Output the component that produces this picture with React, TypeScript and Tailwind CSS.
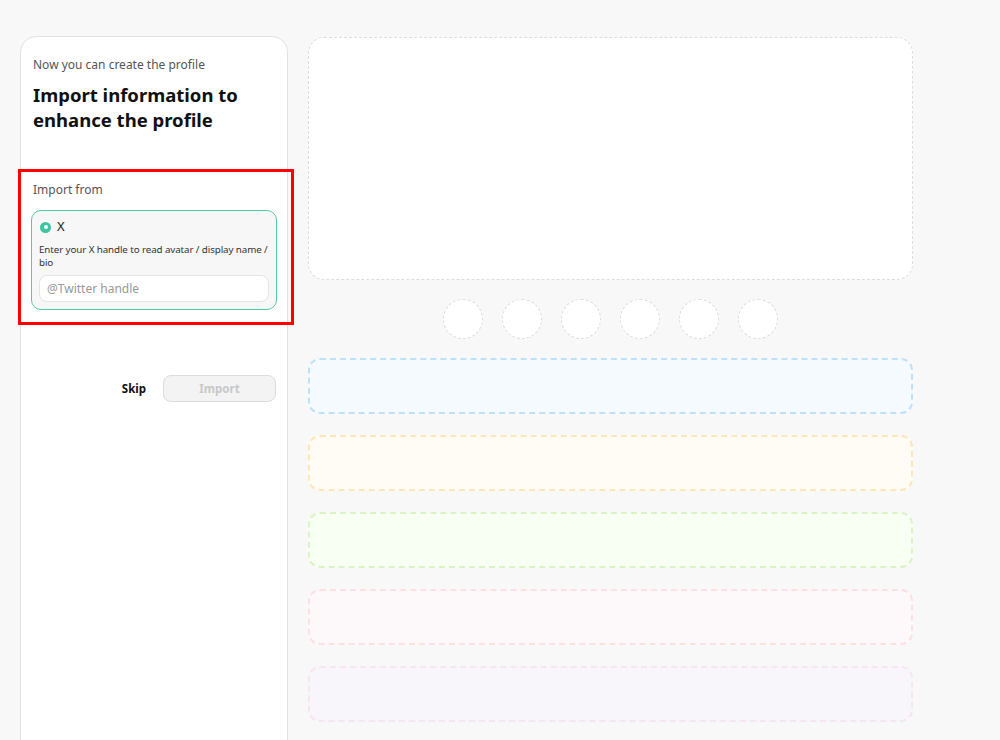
import React from 'react';

const bars = [
  'border-[#bfe1f8] bg-[#f5faff]',
  'border-[#fde6b8] bg-[#fffcf5]',
  'border-[#dbf4c6] bg-[#f8fff3]',
  'border-[#fde0e3] bg-[#fdf9fa]',
  'border-[#f6e6f1] bg-[#f8f6fa]',
];

export default function App() {
  return (
    <div className="relative min-h-[740px] h-[740px] overflow-hidden bg-[#f8f8f8] font-['Noto_Sans',sans-serif] text-[#111]">
      <div className="flex gap-5 pl-5 pt-9">
        {/* Left: import panel */}
        <div className="w-[268px] h-[760px] shrink-0 rounded-t-2xl border border-[#e2e2e2] bg-white px-[10px] pt-[19px]">
          <p className="ml-[2px] text-[12px] leading-[18px] text-[#555]">Now you can create the profile</p>
          <h2 className="ml-[2px] mt-[8px] text-[18.5px] font-bold leading-[25px] text-[#111]">
            Import information to enhance the profile
          </h2>

          <p className="ml-[2px] mt-[49px] text-[12px] leading-[18px] text-[#555]">Import from</p>

          <div className="mt-[11px] rounded-[10px] border-[1.5px] border-[#52c9a7] bg-[#f7f7f7] px-[7px] pb-[7px] pt-[7px]">
            <div className="flex h-[18px] items-center gap-[6px] pl-[1px]">
              <span className="flex h-[11px] w-[11px] items-center justify-center rounded-full bg-[#3fc3a0]">
                <span className="h-[4px] w-[4px] rounded-full bg-white" />
              </span>
              <span className="text-[13px] text-[#222]">X</span>
            </div>
            <p className="mt-[7px] text-[9.8px] leading-[13px] tracking-[-0.1px] text-[#333]">
              Enter your X handle to read avatar / display name / bio
            </p>
            <input
              placeholder="@Twitter handle"
              className="mt-[6px] h-[27px] w-full rounded-lg border border-[#e4e4e4] bg-white px-[7px] text-[12px] text-[#333] outline-none placeholder:text-[#999]"
            />
          </div>

          <div className="mt-[65px] flex items-center justify-end gap-[17px] pr-[1px]">
            <button className="text-[11.5px] font-bold text-[#111]">Skip</button>
            <button className="h-[27px] w-[113px] rounded-lg border border-[#dcdcdc] bg-[#f3f3f3] text-[11.5px] font-bold text-[#c8c8c8]">
              Import
            </button>
          </div>
        </div>

        {/* Right: profile skeleton */}
        <div className="flex w-[605px] flex-col pt-px">
          <div className="h-[243px] rounded-2xl border-[1.5px] border-dashed border-[#dddddd] bg-white" />

          <div className="mt-[19px] flex justify-center gap-[19px]">
            {[0, 1, 2, 3, 4, 5].map((i) => (
              <div key={i} className="h-10 w-10 rounded-full border-[1.5px] border-dashed border-[#dddddd] bg-white" />
            ))}
          </div>

          <div className="mt-[19px] flex flex-col gap-[21px]">
            {bars.map((c, i) => (
              <div key={i} className={`h-[56px] rounded-xl border-2 border-dashed ${c}`} />
            ))}
          </div>
        </div>
      </div>

      {/* annotation box */}
      <div className="pointer-events-none absolute left-[18px] top-[169px] h-[156px] w-[276px] border-[3px] border-[#ff0000]" />
    </div>
  );
}
